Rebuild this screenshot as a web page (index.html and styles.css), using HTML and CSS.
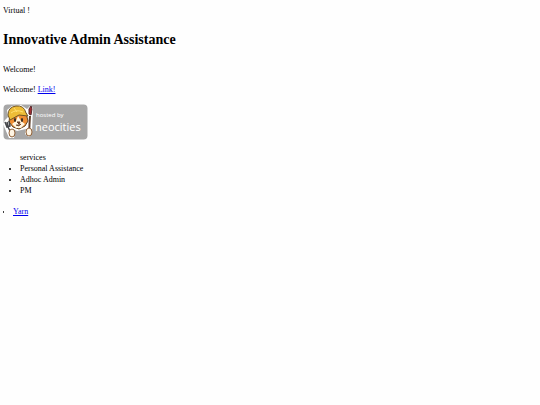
FILE: index.html
```html
<!DOCTYPE html>
<html lang="en">
	<head>
		<meta charset="UTF-8">
		<title>Innovative Admin Assistance</title>
		<link rel="stylesheet" href="styles.css">
	</head>
	<body>
		<div>Virtual !</div>
		<h1>Innovative Admin Assistance</h1>
		<p>Welcome!</p>
		<p>Welcome! <a href="#">Link!</a></p>
		<a class="badge" href="#">
			<svg width="85" height="36" viewBox="0 0 85 36">
				<rect x="0.5" y="0.5" width="84" height="35" rx="4" fill="#a7a7a7"/>
				<!-- white outline -->
				<path d="M5 13L4 6L9 2L18 1L24 5L27 2L30 4L29 29L26 33L22 30L23 25L14 27L10 25L12 29L11 34L6 34L0 20L2 16Z" fill="#fff"/>
				<!-- cat -->
				<path d="M7 10L6 18L10 23L16 25L22 22L25 17L23 9Z" fill="#ee8d32" stroke="#634524" stroke-width="1"/>
				<path d="M15 12L13 17L9 20L13 24L18 24L22 20L18 17Z" fill="#fff5df"/>
				<path d="M5 11Q5 3 13 2Q21 1 23 9L25 12L16 11L7 16Z" fill="#edbd37" stroke="#715424" stroke-width="1"/>
				<path d="M8 9Q13 5 20 8M11 4L14 8" fill="none" stroke="#ffe071" stroke-width="1"/>
				<ellipse cx="12" cy="16" rx="1" ry="2" fill="#292521"/>
				<ellipse cx="19" cy="16" rx="1" ry="2" fill="#292521"/>
				<path d="M14 18H17L16 20ZM13 21Q16 23 18 20" fill="#693e28" stroke="#693e28" stroke-width="1"/>
				<!-- fork -->
				<path d="M2 18L4 23L7 22L6 17M4 18L5 22M5 23L9 31" fill="none" stroke="#45474a" stroke-width="1.5"/>
				<!-- brush -->
				<path d="M27 12L26 29" stroke="#60402b" stroke-width="2"/>
				<path d="M26 10L26 5L28 2L29 5L28 11Z" fill="#a32c30" stroke="#57282b" stroke-width="1"/>
				<ellipse cx="9" cy="29" rx="3" ry="4" fill="#fff5e4" stroke="#8f6037" stroke-width="1"/>
				<ellipse cx="26" cy="28" rx="3" ry="4" fill="#fff5e4" stroke="#8f6037" stroke-width="1"/>
				<text class="hosted" x="33" y="13">hosted by</text>
				<text class="name" x="32" y="27">neocities</text>
			</svg>
		</a>
		<ul class="services">
			<li class="title">services</li>
			<li>Personal Assistance</li>
			<li>Adhoc Admin</li>
			<li>PM</li>
		</ul>
		<ul class="links">
			<li><a href="#">Yarn</a></li>
		</ul>
	</body>
</html>
```
FILE: styles.css
```css
body{
	margin:5px 3px;
	font-family:"Liberation Serif", "Times New Roman", serif;
	font-size:8px;
	line-height:11px;
	color:#000;
	background:#fefefe;
}
h1{
	margin:14px 0;
	font-size:14px;
	line-height:20px;
}
p{
	margin:9px 0;
}
a{
	color:#0000ee;
}
.badge{
	display:block;
	width:85px;
}
.badge svg{
	display:block;
}
.badge text{
	font-family:"Open Sans", sans-serif;
	fill:#fff;
}
.badge .hosted{
	font-size:6px;
}
.badge .name{
	font-size:11px;
}
ul{
	margin:12px 0 10px;
	padding-left:17px;
}
.title{
	list-style:none;
}
.links{
	margin-top:10px;
	padding-left:10px;
}
```
